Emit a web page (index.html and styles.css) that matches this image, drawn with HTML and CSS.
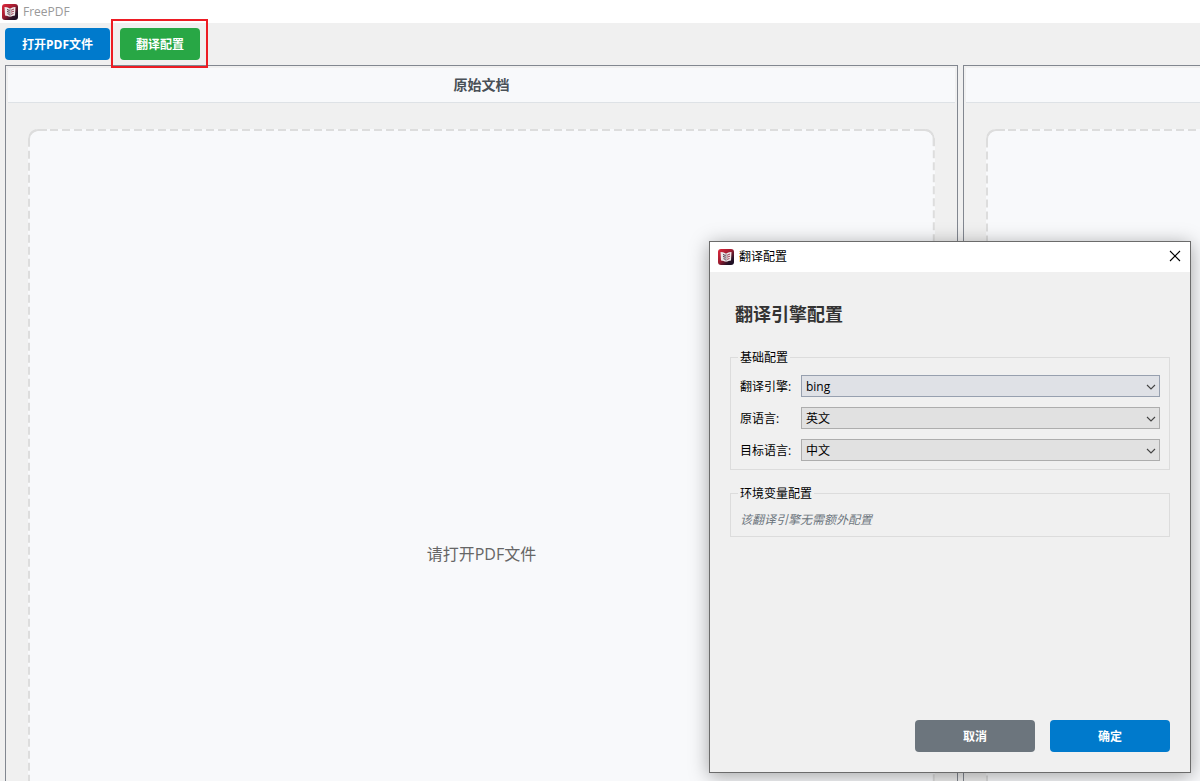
FILE: index.html
```html
<!DOCTYPE html>
<html lang="zh-CN">

<head>
  <meta charset="UTF-8">
  <meta name="viewport" content="width=device-width, initial-scale=1.0">
  <title>FreePDF</title>
  <link rel="stylesheet" href="styles.css">
</head>

<body>
  <svg class="defs" width="0" height="0" aria-hidden="true">
    <defs>
      <linearGradient id="logoBg" x1="0" y1="0" x2="1" y2="1">
        <stop offset="0" stop-color="#e0283c" />
        <stop offset="0.45" stop-color="#a01c30" />
        <stop offset="0.75" stop-color="#2a1428" />
        <stop offset="1" stop-color="#140c20" />
      </linearGradient>
    </defs>
    <symbol id="logo" viewBox="0 0 16 16">
      <rect width="16" height="16" rx="3" fill="url(#logoBg)" />
      <path d="M2.5 3 L5 3.2 L8 4.5 L11 3.2 L13.5 3 L13 11.5 L10.5 12 L8 13 L5.5 12 L3 11.5 Z" fill="#ece8ea" />
      <path d="M5 5.5 L7.5 6.5 M5 7.5 L7.5 8.3 M5.5 9.7 L7.5 10.3" stroke="#4a3040" stroke-width="1" />
      <path d="M12 5 L9 6.3 M12 7.2 L9 8.2 M11.5 9.5 L9 10.4" stroke="#a04458" stroke-width="1" />
      <path d="M8 4.5 V13" stroke="#5c3c48" stroke-width="0.6" />
    </symbol>
    <symbol id="chevron" viewBox="0 0 10 6">
      <path d="M1 1 L5 5 L9 1" fill="none" stroke="#444" stroke-width="1.1" />
    </symbol>
  </svg>

  <header class="titlebar">
    <svg class="logo" aria-hidden="true"><use href="#logo" /></svg>
    <span>FreePDF</span>
  </header>

  <nav class="toolbar">
    <button type="button" class="btn primary open">打开PDF文件</button>
    <div class="highlight">
      <button type="button" class="btn success">翻译配置</button>
    </div>
  </nav>

  <main class="panels">
    <section class="panel">
      <h2 class="panelTitle">原始文档</h2>
      <div class="dropZone">
        <svg class="dash" aria-hidden="true">
          <rect x="1" y="1" rx="9" />
          <path d="M1 17 V10 A9 9 0 0 1 10 1 H19" />
          <svg x="100%" overflow="visible">
            <path d="M-16 1 H-10 A9 9 0 0 1 -1 10 V17" />
          </svg>
        </svg>
        <p>请打开PDF文件</p>
      </div>
    </section>
    <section class="panel cut">
      <h2 class="panelTitle"></h2>
      <div class="dropZone">
        <svg class="dash" aria-hidden="true">
          <rect x="1" y="1" rx="9" />
          <path d="M1 17 V10 A9 9 0 0 1 10 1 H19" />
        </svg>
      </div>
    </section>
  </main>

  <div class="dialog" role="dialog" aria-labelledby="dialogTitle">
    <div class="dialogBar">
      <svg class="logo" aria-hidden="true"><use href="#logo" /></svg>
      <span id="dialogTitle">翻译配置</span>
      <button type="button" class="close" aria-label="关闭">
        <svg width="12" height="12" viewBox="0 0 12 12" aria-hidden="true">
          <path d="M1 1 L11 11 M11 1 L1 11" stroke="#000" stroke-width="1.1" />
        </svg>
      </button>
    </div>
    <form class="dialogBody">
      <h1>翻译引擎配置</h1>
      <fieldset>
        <legend>基础配置</legend>
        <div class="row">
          <label for="engine">翻译引擎:</label>
          <div class="selectBox active">
            <select id="engine">
              <option>bing</option>
            </select>
            <svg class="arrow" aria-hidden="true"><use href="#chevron" /></svg>
          </div>
        </div>
        <div class="row">
          <label for="source">原语言:</label>
          <div class="selectBox">
            <select id="source">
              <option selected>英文</option>
              <option>中文</option>
            </select>
            <svg class="arrow" aria-hidden="true"><use href="#chevron" /></svg>
          </div>
        </div>
        <div class="row">
          <label for="target">目标语言:</label>
          <div class="selectBox">
            <select id="target">
              <option selected>中文</option>
              <option>英文</option>
            </select>
            <svg class="arrow" aria-hidden="true"><use href="#chevron" /></svg>
          </div>
        </div>
      </fieldset>
      <fieldset>
        <legend>环境变量配置</legend>
        <p class="hint">该翻译引擎无需额外配置</p>
      </fieldset>
      <div class="actions">
        <button type="button" class="btn secondary">取消</button>
        <button type="submit" class="btn primary">确定</button>
      </div>
    </form>
  </div>
</body>

</html>
```
FILE: styles.css
```css
* {
  box-sizing: border-box;
}

html,
body {
  height: 100%;
  margin: 0;
  overflow: hidden;
}

body {
  position: relative;
  font-family: "Open Sans", "Noto Sans CJK SC", sans-serif;
  font-size: 12px;
  line-height: 16px;
  color: #000;
  background-color: #f0f0f0;
}

h1,
h2,
p {
  margin: 0;
}

button,
select {
  font-family: inherit;
  font-size: 12px;
}

.defs {
  position: absolute;
}

.logo {
  width: 16px;
  height: 16px;
  flex: none;
}

.titlebar {
  display: flex;
  align-items: center;
  gap: 5px;
  height: 23px;
  padding: 0 2px;
  background-color: #fff;
  color: #999;
}

.toolbar {
  display: flex;
  gap: 10px;
  padding: 5px;
}

.btn {
  height: 32px;
  padding: 0 16px;
  border: none;
  border-radius: 4px;
  color: #fff;
  font-weight: bold;
  white-space: nowrap;
  cursor: pointer;
}

.open {
  min-width: 105px;
}

.primary {
  background-color: #007acc;
}

.success {
  background-color: #28a745;
}

.secondary {
  background-color: #6c757d;
}

/* red frame around the config button */
.highlight {
  position: relative;
}

.highlight::after {
  content: "";
  position: absolute;
  inset: -9px -8px -8px -9px;
  border: 2px solid #ed1c24;
  pointer-events: none;
}

.panels {
  display: grid;
  grid-template-columns: 4fr 1fr;
  gap: 5px;
  margin: 0 -1px 0 5px;
}

.panel {
  min-width: 0;
  padding: 2px;
  border: 1px solid #828790;
}

.panelTitle {
  height: 35px;
  border-bottom: 1px solid #dee2e6;
  background-color: #f8f9fb;
  color: #495057;
  font-size: 14px;
  line-height: 34px;
  text-align: center;
}

.dropZone {
  position: relative;
  display: grid;
  place-items: center;
  min-height: 850px;
  margin: 26px 20px 20px;
  border-radius: 10px;
  background-color: #f8f9fb;
  color: #666;
  font-size: 16px;
  line-height: 24px;
}

.dash {
  position: absolute;
  inset: 0;
  width: 100%;
  height: 100%;
  fill: none;
  stroke: #ddd;
  stroke-width: 2px;
}

.dash rect {
  width: calc(100% - 2px);
  height: calc(100% - 2px);
  stroke-dasharray: 8 4;
}

/* the second panel runs off the right side of the window */
.cut {
  padding-right: 0;
  border-right: none;
}

.cut .dropZone {
  margin-right: -20px;
}

.dialog {
  position: absolute;
  top: 241px;
  right: 9px;
  display: flex;
  flex-direction: column;
  width: 482px;
  min-height: 532px;
  border: 1px solid #6b6b6b;
  background-color: #f0f0f0;
  box-shadow: 0 3px 18px rgba(0, 0, 0, 0.35);
}

.dialogBar {
  display: flex;
  align-items: center;
  gap: 5px;
  height: 30px;
  padding: 0 8px;
  background-color: #fff;
}

.close {
  display: flex;
  margin-left: auto;
  padding: 0 1px 2px;
  border: none;
  background: none;
}

.dialogBody {
  flex: 1;
  display: flex;
  flex-direction: column;
  gap: 14px;
  padding: 20px;
}

h1 {
  padding: 10px 5px 8px;
  color: #333;
  font-size: 18px;
  line-height: 24px;
}

fieldset {
  display: flex;
  flex-direction: column;
  gap: 10px;
  margin: 0;
  padding: 9px 9px 8px;
  border: 1px solid #dcdcdc;
}

legend {
  margin-left: -2px;
  padding: 2px 2px 0;
}

.row {
  display: grid;
  grid-template-columns: 61px 1fr;
  align-items: center;
}

.row label {
  padding-top: 2px;
}

.selectBox {
  position: relative;
}

.selectBox select {
  display: block;
  width: 100%;
  height: 22px;
  padding: 0 20px 0 4px;
  border: 1px solid #adadad;
  border-radius: 0;
  background-color: #e1e1e1;
  color: #000;
  appearance: none;
}

.active select {
  border-color: #97a0af;
  background-color: #dfe1e6;
}

.arrow {
  position: absolute;
  top: 9px;
  right: 4px;
  width: 10px;
  height: 6px;
  pointer-events: none;
}

.hint {
  padding-top: 1px;
  color: #6c757d;
  font-style: italic;
}

.actions {
  display: flex;
  justify-content: flex-end;
  gap: 15px;
  margin-top: auto;
}

.actions .btn {
  width: 120px;
}
```
